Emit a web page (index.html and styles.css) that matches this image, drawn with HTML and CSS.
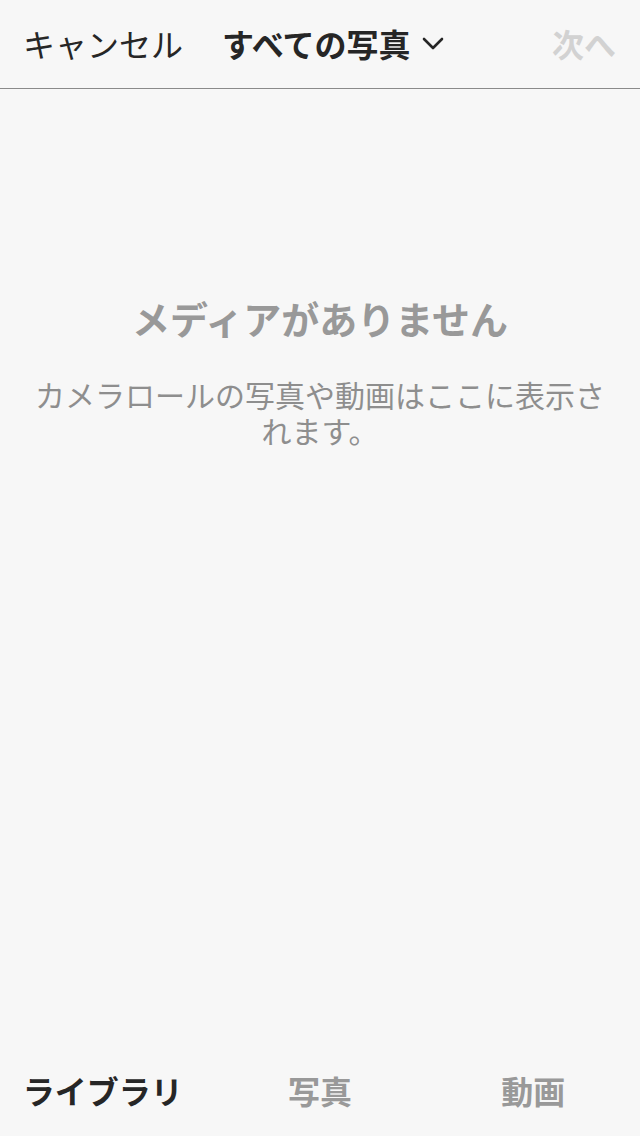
FILE: index.html
```html
<!DOCTYPE html>
<html lang="ja">
<head>
<meta charset="utf-8">
<link rel="stylesheet" href="styles.css">
</head>
<body>
<div class="app">
  <header class="nav">
    <span class="cancel">キャンセル</span>
    <span class="title">すべての写真<svg class="chev" width="22" height="14" viewBox="0 0 22 14"><path d="M2 2 L11 11 L20 2" fill="none" stroke="#262626" stroke-width="2.6" stroke-linecap="round" stroke-linejoin="round"/></svg></span>
    <span class="next">次へ</span>
  </header>
  <main class="content">
    <h1 class="empty-title">メディアがありません</h1>
    <p class="empty-text">カメラロールの写真や動画はここに表示されます。</p>
  </main>
  <nav class="tabs">
    <span class="tab active">ライブラリ</span>
    <span class="tab">写真</span>
    <span class="tab">動画</span>
  </nav>
</div>
</body>
</html>
```

FILE: styles.css
```css
html, body {
  margin: 0;
  padding: 0;
  background: #f7f7f7;
}
body {
  font-family: "Noto Sans CJK JP", "Noto Sans", sans-serif;
}
.app {
  width: 640px;
  height: 1136px;
  display: flex;
  flex-direction: column;
}
.nav {
  height: 89px;
  box-sizing: border-box;
  flex: none;
  display: flex;
  align-items: center;
  padding: 0 24px 3px 23px;
  border-bottom: 1px solid #8a8a8a;
  font-size: 32px;
  line-height: 40px;
}
.cancel {
  color: #262626;
  font-weight: 400;
}
.title {
  margin-left: 39px;
  color: #262626;
  font-weight: 700;
  display: flex;
  align-items: center;
}
.chev {
  margin-left: 11px;
  margin-top: 2px;
}
.next {
  margin-left: auto;
  color: #d2d2d2;
  font-weight: 700;
}
.content {
  flex: 1;
  padding: 205px 34px 0;
  text-align: center;
}
.empty-title {
  margin: 0;
  font-size: 38px;
  line-height: 48px;
  font-weight: 700;
  color: #999999;
}
.empty-text {
  margin: 34px 0 0;
  font-size: 30px;
  line-height: 36px;
  font-weight: 400;
  color: #8e8e8e;
}
.tabs {
  height: 88px;
  box-sizing: border-box;
  padding-bottom: 4px;
  flex: none;
  display: grid;
  grid-template-columns: 1fr 1fr 1fr;
  align-items: center;
  text-align: center;
  font-size: 32px;
  line-height: 40px;
  font-weight: 700;
}
.tab {
  color: #999999;
}
.tab.active {
  color: #262626;
  margin-right: 8px;
}
```
